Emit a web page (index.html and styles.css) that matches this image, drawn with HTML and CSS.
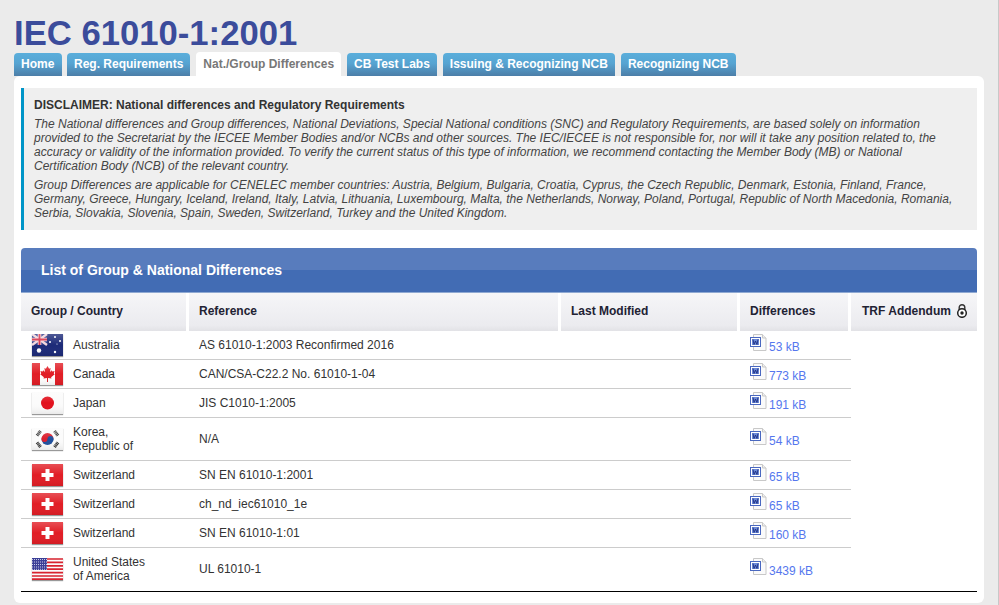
FILE: index.html
```html
<!DOCTYPE html>
<html lang="en">
  <head>
    <meta charset="UTF-8" />
    <title>IEC 61010-1:2001</title>
    <link rel="stylesheet" href="styles.css">
  </head>
  <body>
    <svg class="defs" width="0" height="0">
      <defs>
        <linearGradient id="gloss" x1="0" y1="0" x2="0" y2="1">
          <stop offset="0" stop-color="#fff" stop-opacity=".22" />
          <stop offset=".5" stop-color="#fff" stop-opacity="0" />
          <stop offset="1" stop-color="#000" stop-opacity=".07" />
        </linearGradient>
        <symbol id="flag-au" viewBox="0 0 31 22">
          <rect width="31" height="22" fill="#1c2a78" />
          <rect width="15" height="11" fill="#2d3a88" />
          <path d="M0 0l15 11M15 0L0 11" stroke="#f2d6dc" stroke-width="2.4" />
          <path d="M7.5 0v11M0 5.500h15" stroke="#f2d6dc" stroke-width="3.600" />
          <path d="M7.500 0v11M0 5.500h15" stroke="#d8334a" stroke-width="1.800" />
          <circle cx="7" cy="16.500" r="2.200" fill="#fff" />
          <circle cx="23" cy="3" r="1" fill="#fff" />
          <circle cx="18" cy="8" r="1" fill="#fff" />
          <circle cx="28" cy="7" r="1" fill="#fff" />
          <circle cx="23" cy="18" r="1.200" fill="#fff" />
          <circle cx="25" cy="10" r=".6" fill="#fff" />
          <rect width="31" height="22" fill="url(#gloss)" />
        </symbol>
        <symbol id="flag-ca" viewBox="0 0 31 22">
          <rect width="31" height="22" fill="#fff" />
          <rect width="8" height="22" fill="#e11d25" />
          <rect x="23" width="8" height="22" fill="#e11d25" />
          <path d="M15.500 3l1.600 2.800 1.500-.7-.6 4 1.800-1.800.5 1.200 2.300-.4-.8 2.500 1 .6-3.700 3 .4 1.400-3.500-.5V19h-1v-3.900l-3.500.5.400-1.400-3.700-3 1-.6-.8-2.500 2.300.4.500-1.200 1.800 1.800-.6-4 1.500.7z" fill="#e11d25" />
          <rect width="31" height="22" fill="url(#gloss)" />
        </symbol>
        <symbol id="flag-jp" viewBox="0 0 31 22">
          <rect width="31" height="22" fill="#fbfbfb" />
          <circle cx="15.500" cy="11" r="6.500" fill="#e2101c" />
          <rect width="31" height="22" fill="url(#gloss)" />
        </symbol>
        <symbol id="flag-kr" viewBox="0 0 31 22">
          <rect width="31" height="22" fill="#fbfbfb" />
          <path d="M9.500 11a6 6 0 0 1 12 0z" fill="#dc1f2e" />
          <path d="M9.500 11a6 6 0 0 0 12 0z" fill="#1f4f9c" />
          <circle cx="12.500" cy="11" r="3" fill="#dc1f2e" />
          <circle cx="18.500" cy="11" r="3" fill="#1f4f9c" />
          <g stroke="#333" stroke-width="3.200" stroke-dasharray="1.100 .5">
            <path d="M5 7.500l3.500-4.500" />
            <path d="M22.500 3l3.500 4.500" />
            <path d="M5 14.500l3.500 4.500" />
            <path d="M22.500 19l3.500-4.500" />
          </g>
          <rect width="31" height="22" fill="url(#gloss)" />
        </symbol>
        <symbol id="flag-ch" viewBox="0 0 31 22">
          <rect width="31" height="22" fill="#e11d25" />
          <path d="M13.500 5h4v4h4v4h-4v4h-4v-4h-4V9h4z" fill="#fff" />
          <rect width="31" height="22" fill="url(#gloss)" />
        </symbol>
        <symbol id="flag-us" viewBox="0 0 31 22">
          <rect width="31" height="22" fill="#fbfbfb" />
          <path d="M0 1h31M0 4.400h31M0 7.800h31M0 11.200h31M0 14.600h31M0 18h31M0 21.200h31" stroke="#d8232f" stroke-width="1.700" />
          <rect width="15" height="12" fill="#3c3f97" />
          <path d="M0 1.500h15M0 4h15M0 6.500h15M0 9h15M0 11.300h15" stroke="#c9cbe6" stroke-width="1" stroke-dasharray="1 1" />
        </symbol>
        <symbol id="doc" viewBox="0 0 17 17">
          <path d="M3.500.5h9l3.500 3.500v12.500h-12.500z" fill="#fafafa" stroke="#c8c8c8" />
          <path d="M12.500.5v3.500h3.500" fill="#eee" stroke="#c8c8c8" />
          <rect x=".5" y="3.500" width="10" height="9" fill="#fff" stroke="#4a68c0" />
          <rect x="2" y="5" width="7" height="6" fill="#6c8ad8" />
          <path d="M3 5.500l1 5 1.500-3.500 1.500 3.500 1-5" fill="none" stroke="#1d2f80" stroke-width=".9" />
        </symbol>
      </defs>
    </svg>

    <main class="page">
      <h1 class="title">IEC 61010-1:2001</h1>

      <nav class="tabs">
        <a class="tab">Home</a>
        <a class="tab">Reg. Requirements</a>
        <a class="tab tab--active">Nat./Group Differences</a>
        <a class="tab">CB Test Labs</a>
        <a class="tab">Issuing &amp; Recognizing NCB</a>
        <a class="tab">Recognizing NCB</a>
      </nav>

      <div class="panel">
        <section class="disclaimer">
          <h2>DISCLAIMER: National differences and Regulatory Requirements</h2>
          <p>The National differences and Group differences, National Deviations, Special National conditions (SNC) and Regulatory Requirements, are based solely on information provided to the Secretariat by the IECEE Member Bodies and/or NCBs and other sources. The IEC/IECEE is not responsible for, nor will it take any position related to, the accuracy or validity of the information provided. To verify the current status of this type of information, we recommend contacting the Member Body (MB) or National Certification Body (NCB) of the relevant country.</p>
          <p>Group Differences are applicable for CENELEC member countries: Austria, Belgium, Bulgaria, Croatia, Cyprus, the Czech Republic, Denmark, Estonia, Finland, France, Germany, Greece, Hungary, Iceland, Ireland, Italy, Latvia, Lithuania, Luxembourg, Malta, the Netherlands, Norway, Poland, Portugal, Republic of North Macedonia, Romania, Serbia, Slovakia, Slovenia, Spain, Sweden, Switzerland, Turkey and the United Kingdom.</p>
        </section>

        <div class="list-title">List of Group &amp; National Differences</div>

        <table class="diffs">
          <colgroup>
            <col class="col-country" />
            <col class="col-ref" />
            <col class="col-date" />
            <col class="col-diff" />
            <col class="col-trf" />
          </colgroup>
          <thead>
            <tr>
              <th>Group / Country</th>
              <th>Reference</th>
              <th>Last Modified</th>
              <th>Differences</th>
              <th>
                TRF Addendum
                <svg class="lock" width="12" height="14" viewBox="0 0 12 14">
                  <path d="M3.200 6V3.500a2.800 2.800 0 0 1 5.600 0V6" fill="none" stroke="#333" stroke-width="1.400" />
                  <circle cx="6" cy="9" r="4.300" fill="#fff" stroke="#222" stroke-width="1.500" />
                  <circle cx="6" cy="9" r="1.700" fill="#222" />
                </svg>
              </th>
            </tr>
          </thead>
          <tbody>
            <tr>
              <td class="country"><svg class="flag"><use href="#flag-au" /></svg><span>Australia</span></td>
              <td>AS 61010-1:2003 Reconfirmed 2016</td>
              <td></td>
              <td class="file"><svg class="doc"><use href="#doc" /></svg><a>53 kB</a></td>
              <td class="blank"></td>
            </tr>
            <tr>
              <td class="country"><svg class="flag"><use href="#flag-ca" /></svg><span>Canada</span></td>
              <td>CAN/CSA-C22.2 No. 61010-1-04</td>
              <td></td>
              <td class="file"><svg class="doc"><use href="#doc" /></svg><a>773 kB</a></td>
              <td class="blank"></td>
            </tr>
            <tr>
              <td class="country"><svg class="flag"><use href="#flag-jp" /></svg><span>Japan</span></td>
              <td>JIS C1010-1:2005</td>
              <td></td>
              <td class="file"><svg class="doc"><use href="#doc" /></svg><a>191 kB</a></td>
              <td class="blank"></td>
            </tr>
            <tr class="tall">
              <td class="country"><svg class="flag"><use href="#flag-kr" /></svg><span>Korea,<br />Republic of</span></td>
              <td>N/A</td>
              <td></td>
              <td class="file"><svg class="doc"><use href="#doc" /></svg><a>54 kB</a></td>
              <td class="blank"></td>
            </tr>
            <tr>
              <td class="country"><svg class="flag"><use href="#flag-ch" /></svg><span>Switzerland</span></td>
              <td>SN EN 61010-1:2001</td>
              <td></td>
              <td class="file"><svg class="doc"><use href="#doc" /></svg><a>65 kB</a></td>
              <td class="blank"></td>
            </tr>
            <tr>
              <td class="country"><svg class="flag"><use href="#flag-ch" /></svg><span>Switzerland</span></td>
              <td>ch_nd_iec61010_1e</td>
              <td></td>
              <td class="file"><svg class="doc"><use href="#doc" /></svg><a>65 kB</a></td>
              <td class="blank"></td>
            </tr>
            <tr>
              <td class="country"><svg class="flag"><use href="#flag-ch" /></svg><span>Switzerland</span></td>
              <td>SN EN 61010-1:01</td>
              <td></td>
              <td class="file"><svg class="doc"><use href="#doc" /></svg><a>160 kB</a></td>
              <td class="blank"></td>
            </tr>
            <tr class="tall tall--last">
              <td class="country"><svg class="flag"><use href="#flag-us" /></svg><span>United States<br />of America</span></td>
              <td>UL 61010-1</td>
              <td></td>
              <td class="file"><svg class="doc"><use href="#doc" /></svg><a>3439 kB</a></td>
              <td class="blank"></td>
            </tr>
          </tbody>
        </table>
      </div>
    </main>
  </body>
</html>
```

FILE: styles.css
```css
* {
  box-sizing: border-box;
}

html,
body {
  height: 100%;
  margin: 0;
  overflow: hidden;
}

body {
  background-color: #ebebeb;
  border-right: 1px solid #c8c8c8;
  font-family: "Liberation Sans", Arial, sans-serif;
  font-size: 12px;
  color: #222;
}

.defs {
  position: absolute;
}

.page {
  padding: 14px 14px 0 14px;
}

.title {
  margin: 0;
  height: 38px;
  font-size: 34.67px;
  line-height: 38px;
  font-weight: bold;
  color: #3b4c9b;
}

.tabs {
  display: flex;
  align-items: flex-end;
  gap: 5px;
  height: 24px;
}

.tab {
  height: 23px;
  padding: 0 7px;
  line-height: 23px;
  font-weight: bold;
  color: #fff;
  background: linear-gradient(#5aaedb 0%, #56a4d2 45%, #4c7ea8 100%);
  border-radius: 4px 4px 0 0;
}

.tab:first-child {
  width: 48px;
}

.tab--active {
  height: 24px;
  margin: 0 1px;
  line-height: 24px;
  color: #777;
  background: #fff;
}

.tab:nth-child(5),
.tab:nth-child(6) {
  margin-left: 1px;
}

.panel {
  height: 527px;
  padding: 12px 7px 0 7px;
  background-color: #fff;
  border-radius: 6px;
}

.disclaimer {
  height: 142px;
  padding: 10px 10px 0 10px;
  background-color: #efefef;
  border-left: 3px solid #0095c8;
  line-height: 14px;
}

.disclaimer h2 {
  margin: 0 0 5px 0;
  font-size: 12px;
  line-height: 14px;
  font-weight: bold;
  color: #333;
}

.disclaimer p {
  margin: 0 0 5px 0;
  font-style: italic;
  color: #444;
}

.list-title {
  height: 45px;
  margin-top: 18px;
  padding-left: 20px;
  line-height: 44px;
  font-size: 14px;
  font-weight: bold;
  color: #fff;
  background: linear-gradient(#587cbd 0%, #587cbd 50%, #426cb4 50%, #426cb4 100%);
  border-bottom: 1px solid #8fa9d2;
  border-radius: 4px 4px 0 0;
}

.diffs {
  width: 956px;
  table-layout: fixed;
  border-collapse: separate;
  border-spacing: 0;
}

.col-country {
  width: 168px;
}

.col-ref {
  width: 372px;
}

.col-date {
  width: 179px;
}

.col-diff {
  width: 111px;
}

.col-trf {
  width: 126px;
}

.diffs th {
  height: 38px;
  padding: 0 3px 2px 10px;
  text-align: left;
  font-weight: bold;
  color: #223;
  background: linear-gradient(#f6f6f8 0%, #ebebef 85%, #e2e2e6 100%);
  border-right: 3px solid #fff;
}

.diffs th:last-child {
  padding-left: 11px;
  border-right: 0;
  white-space: nowrap;
}

.lock {
  margin-left: 2px;
  vertical-align: -3px;
}

.diffs td {
  height: 29px;
  padding: 0 0 0 10px;
  border-bottom: 1px solid #ccc;
  color: #333;
}

.diffs tr.tall td {
  height: 43px;
}

.diffs tr.tall--last td {
  height: 44px;
  padding-bottom: 2px;
  border-bottom-color: #000;
}

.diffs td.blank {
  border-bottom-color: transparent;
}

.diffs tr.tall--last td.blank {
  border-bottom-color: #000;
}

.country {
  white-space: nowrap;
}

.diffs td.country {
  padding-left: 11px;
}

.country span {
  display: inline-block;
  vertical-align: middle;
  line-height: 14px;
}

.flag {
  width: 31px;
  height: 22px;
  margin-right: 10px;
  vertical-align: middle;
  box-shadow: 0 1px 1px #999;
}

.file {
  white-space: nowrap;
}

.diffs td.file {
  padding-bottom: 2px;
}

.diffs tr.tall--last td.file {
  padding-bottom: 4px;
}

.doc {
  width: 17px;
  height: 17px;
  margin-right: 2px;
  vertical-align: 0;
}

.file a {
  color: #5577ee;
}
```
